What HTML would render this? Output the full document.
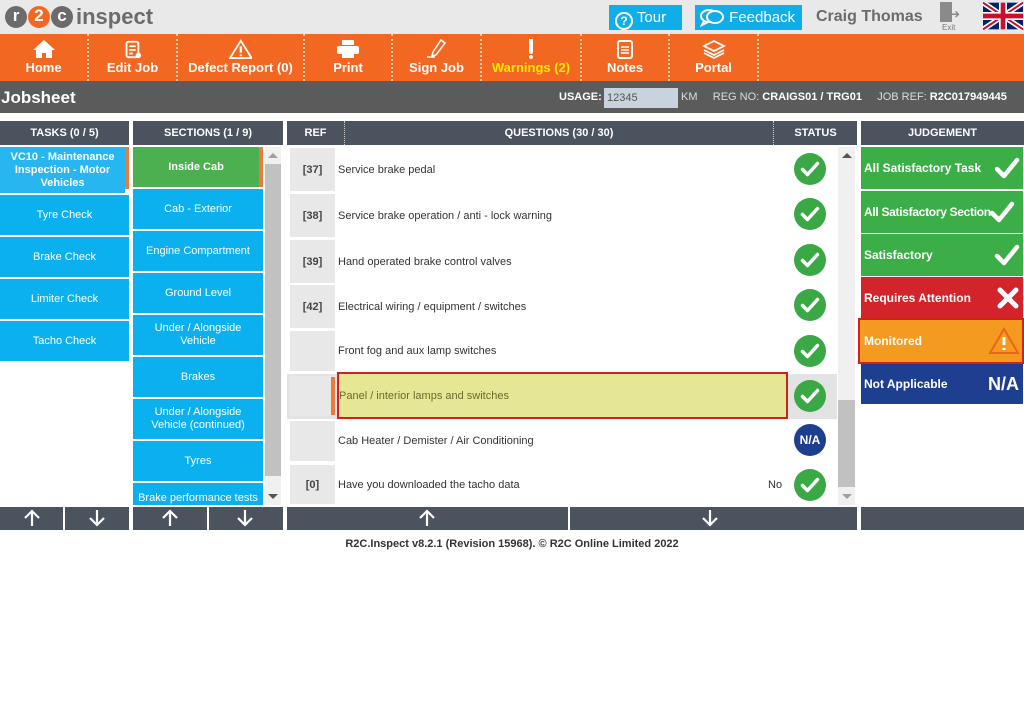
<!DOCTYPE html>
<html><head><meta charset="utf-8"><style>
*{box-sizing:border-box;margin:0;padding:0}
body{width:1024px;height:709px;background:#fff;font-family:"Liberation Sans",Arial,sans-serif;position:relative;overflow:hidden}
.a{position:absolute}
.top{left:0;top:0;width:1024px;height:34px;background:#e9e9e9}
.nav{left:0;top:34px;width:1024px;height:47px;background:#f26722}
.ni{position:absolute;top:0;height:47px;color:#fff;font-weight:bold;font-size:13px;text-align:center;border-right:2px dotted #f5c9a8}
.ni svg{display:block;margin:5px auto 0;height:20px}
.ni span{display:block;margin-top:1px}
.gb{left:0;top:81px;width:1024px;height:32px;background:#5b5b5b;color:#fff}
.hd{top:121px;height:24px;background:#4b535f;color:#fff;font-weight:bold;font-size:11px;text-align:center;line-height:24px}
.bl{background:#0bb0ee;color:#fff;font-size:11px;text-align:center;display:flex;align-items:center;justify-content:center;line-height:13px}
.ref{left:290px;width:45px;background:#e8e8e8;color:#444;font-size:11px;font-weight:bold;display:flex;align-items:center;justify-content:center}
.q{left:338px;color:#333;font-size:11px;display:flex;align-items:center}
.jb{left:861px;width:162px;color:#fff;font-weight:bold;font-size:12px;display:flex;align-items:center;padding-left:3px;white-space:nowrap;overflow:hidden}
.jb svg{margin-left:auto;margin-right:3px;flex-shrink:0}
.bn{top:507px;height:23px;background:#4b535f}
</style></head><body>
<div class="a top"></div>
<div class="a" style="left:5px;top:4px;display:flex;align-items:center">
<div style="width:22px;height:22px;border-radius:50%;background:#6b6b6b;color:#fff;font-weight:bold;font-size:17px;text-align:center;line-height:20px">r</div>
<div style="width:22px;height:22px;border-radius:50%;background:#f26722;color:#fff;font-weight:bold;font-size:17px;text-align:center;line-height:20px;margin-left:1px">2</div>
<div style="width:22px;height:22px;border-radius:50%;background:#6b6b6b;color:#fff;font-weight:bold;font-size:17px;text-align:center;line-height:20px;margin-left:1px">c</div>
<span style="font-size:22px;color:#6b6b6b;margin-left:3px;font-weight:bold">inspect</span></div>
<div class="a" style="left:609px;top:5px;width:73px;height:25px;background:#0faee8;color:#fff;font-size:15px;line-height:25px;padding-left:6px">
<span style="display:inline-block;width:18px;height:18px;border:2px solid #fff;border-radius:50%;font-size:12px;text-align:center;line-height:14px;font-weight:bold;vertical-align:-3px">?</span> Tour</div>
<div class="a" style="left:695px;top:5px;width:107px;height:25px;background:#0faee8;color:#fff;font-size:15px;line-height:25px;padding-left:4px">
<svg width="26" height="20" style="vertical-align:-5px" viewBox="0 0 26 20"><ellipse cx="10" cy="9" rx="8" ry="6" fill="none" stroke="#fff" stroke-width="2"/><ellipse cx="16" cy="10" rx="8" ry="6" fill="#0faee8" stroke="#fff" stroke-width="2"/><path d="M5 14 L3 18 L9 15" fill="none" stroke="#fff" stroke-width="2"/></svg> Feedback</div>
<div class="a" style="left:816px;top:8px;font-size:16px;font-weight:bold;color:#6b6b6b">Craig Thomas</div>
<div class="a" style="left:940px;top:2px;width:20px;height:20px;background:#8a8a8a;clip-path:polygon(0 0,60% 0,60% 100%,0 100%)"></div>
<div class="a" style="left:950px;top:7px;color:#8a8a8a;font-size:12px">➜</div>
<div class="a" style="left:942px;top:23px;font-size:8px;color:#777">Exit</div>
<svg class="a" style="left:983px;top:2px" width="40" height="28" viewBox="0 0 60 40"><rect width="60" height="40" fill="#012169"/><path d="M0 0L60 40M60 0L0 40" stroke="#fff" stroke-width="8"/><path d="M0 0L60 40M60 0L0 40" stroke="#c8102e" stroke-width="3"/><path d="M30 0V40M0 20H60" stroke="#fff" stroke-width="12"/><path d="M30 0V40M0 20H60" stroke="#c8102e" stroke-width="7"/></svg>

<div class="a nav">
<div class="ni" style="left:0;width:89px"><svg viewBox="0 0 24 20"><path d="M12 1L1 11h3v8h6v-5h4v5h6v-8h3z" fill="#fff"/></svg><span>Home</span></div>
<div class="ni" style="left:89px;width:89px"><svg viewBox="0 0 24 22"><rect x="5" y="3" width="13" height="17" rx="2" fill="none" stroke="#fff" stroke-width="2"/><path d="M8 8h7M8 12h7M8 16h4" stroke="#fff" stroke-width="2"/><circle cx="18" cy="18" r="3" fill="#fff"/></svg><span>Edit Job</span></div>
<div class="ni" style="left:178px;width:127px"><svg viewBox="0 0 26 22"><path d="M13 2L1 21h24z" fill="none" stroke="#fff" stroke-width="2"/><path d="M13 8v7M13 17v2" stroke="#fff" stroke-width="2.5"/></svg><span>Defect Report (0)</span></div>
<div class="ni" style="left:305px;width:88px"><svg viewBox="0 0 24 20"><rect x="6" y="1" width="12" height="5" fill="#fff"/><rect x="1" y="7" width="22" height="8" rx="2" fill="#fff"/><rect x="6" y="14" width="12" height="5" fill="#fff"/></svg><span>Print</span></div>
<div class="ni" style="left:393px;width:89px"><svg viewBox="0 0 24 20"><path d="M16 1l4 3-9 12-4 1 1-4z" fill="none" stroke="#fff" stroke-width="1.5"/><path d="M2 18h8" stroke="#fff" stroke-width="1.5"/></svg><span>Sign Job</span></div>
<div class="ni" style="left:482px;width:100px;color:#ffea00"><svg viewBox="0 0 24 20"><path d="M12 1v12" stroke="#fff" stroke-width="4" stroke-linecap="round"/><circle cx="12" cy="18" r="2" fill="#fff"/></svg><span>Warnings (2)</span></div>
<div class="ni" style="left:582px;width:88px"><svg viewBox="0 0 24 20"><rect x="5" y="2" width="14" height="17" rx="2" fill="none" stroke="#fff" stroke-width="2"/><path d="M8 8h8M8 11h8M8 14h8" stroke="#fff" stroke-width="1.5"/></svg><span>Notes</span></div>
<div class="ni" style="left:670px;width:89px"><svg viewBox="0 0 24 20"><path d="M12 2L2 7l10 5 10-5z M2 11l10 5 10-5 M2 14l10 5 10-5" fill="none" stroke="#fff" stroke-width="1.8"/></svg><span>Portal</span></div>
</div>

<div class="a gb"><div class="a" style="left:1px;top:7px;font-size:17px;font-weight:bold">Jobsheet</div>
<div class="a" style="left:559px;top:10px;font-size:11px;font-weight:bold">USAGE:</div>
<div class="a" style="left:604px;top:7px;width:74px;height:20px;background:#c9d3de;color:#555;font-size:11px;line-height:20px;padding-left:3px">12345</div>
<div class="a" style="left:681px;top:10px;font-size:11px;color:#ddd">KM &nbsp; &nbsp; REG NO: <b style="color:#fff">CRAIGS01 / TRG01</b> &nbsp; &nbsp; JOB REF: <b style="color:#fff">R2C017949445</b></div></div>

<div class="a hd" style="left:0;width:129px">TASKS (0 / 5)</div>
<div class="a hd" style="left:133px;width:150px">SECTIONS (1 / 9)</div>
<div class="a hd" style="left:287px;width:58px;border-right:1px dotted #ccc">REF</div>
<div class="a hd" style="left:345px;width:429px;border-right:1px dotted #ccc">QUESTIONS (30 / 30)</div>
<div class="a hd" style="left:774px;width:83px">STATUS</div>
<div class="a hd" style="left:861px;width:163px">JUDGEMENT</div>

<div class="a bl" style="left:0;top:147px;width:125px;height:46px;background:#27b6f0;font-weight:bold">VC10 - Maintenance<br>Inspection - Motor<br>Vehicles</div>
<div class="a" style="left:125px;top:147px;width:4px;height:42px;background:#e87b3f"></div>
<div class="a bl" style="left:0;top:195px;width:129px;height:40px">Tyre Check</div>
<div class="a bl" style="left:0;top:237px;width:129px;height:40px">Brake Check</div>
<div class="a bl" style="left:0;top:279px;width:129px;height:40px">Limiter Check</div>
<div class="a bl" style="left:0;top:321px;width:129px;height:40px">Tacho Check</div>

<div class="a bl" style="left:133px;top:147px;width:126px;height:40px;background:#4cb050;font-weight:bold">Inside Cab</div>
<div class="a" style="left:259px;top:147px;width:4px;height:40px;background:#e87b3f"></div>
<div class="a bl" style="left:133px;top:189px;width:130px;height:40px">Cab - Exterior</div>
<div class="a bl" style="left:133px;top:231px;width:130px;height:40px">Engine Compartment</div>
<div class="a bl" style="left:133px;top:273px;width:130px;height:40px">Ground Level</div>
<div class="a bl" style="left:133px;top:315px;width:130px;height:40px">Under / Alongside<br>Vehicle</div>
<div class="a bl" style="left:133px;top:357px;width:130px;height:40px">Brakes</div>
<div class="a bl" style="left:133px;top:399px;width:130px;height:40px">Under / Alongside<br>Vehicle (continued)</div>
<div class="a bl" style="left:133px;top:441px;width:130px;height:40px">Tyres</div>
<div class="a bl" style="left:133px;top:483px;width:130px;height:22px;align-items:flex-end">Brake performance tests</div>
<div class="a" style="left:265px;top:147px;width:16px;height:358px;background:#f0f0f0"></div>
<div class="a" style="left:265px;top:164px;width:16px;height:312px;background:#c1c1c1"></div>
<div class="a" style="left:268px;top:153px;border:5px solid transparent;border-bottom-color:#a0a0a0;border-top:0"></div>
<div class="a" style="left:268px;top:494px;border:5px solid transparent;border-top-color:#555;border-bottom:0"></div>

<div class="a" style="left:287px;top:374px;width:550px;height:45px;background:#e3e3e3"></div>
<div class="a ref" style="top:148px;height:43px">[37]</div><div class="a q" style="top:148px;height:43px">Service brake pedal</div>
<div class="a ref" style="top:194px;height:43px">[38]</div><div class="a q" style="top:194px;height:43px">Service brake operation / anti - lock warning</div>
<div class="a ref" style="top:240px;height:43px">[39]</div><div class="a q" style="top:240px;height:43px">Hand operated brake control valves</div>
<div class="a ref" style="top:285px;height:43px">[42]</div><div class="a q" style="top:285px;height:43px">Electrical wiring / equipment / switches</div>
<div class="a ref" style="top:331px;height:40px"></div><div class="a q" style="top:331px;height:40px">Front fog and aux lamp switches</div>
<div class="a ref" style="top:376px;height:40px"></div>
<div class="a" style="left:331px;top:377px;width:4px;height:38px;background:#e87b3f"></div>
<div class="a q" style="left:337px;top:372px;width:451px;height:47px;background:#e5e795;border:2px solid #d02020;color:#6b6b2b">Panel / interior lamps and switches</div>
<div class="a ref" style="top:421px;height:40px"></div><div class="a q" style="top:421px;height:40px">Cab Heater / Demister / Air Conditioning</div>
<div class="a ref" style="top:465px;height:39px">[0]</div><div class="a q" style="top:465px;height:39px">Have you downloaded the tacho data</div>
<div class="a" style="left:768px;top:479px;font-size:11px;color:#333">No</div>
<svg width="0" height="0"><defs><symbol id="ck" viewBox="0 0 32 32"><circle cx="16" cy="16" r="16" fill="#3aa845"/><path d="M8.5 16.5l5 5 10-11" fill="none" stroke="#fff" stroke-width="3.5" stroke-linecap="round" stroke-linejoin="round"/></symbol></defs></svg>
<svg class="a" style="left:794px;top:153px" width="32" height="32"><use href="#ck"/></svg>
<svg class="a" style="left:794px;top:198px" width="32" height="32"><use href="#ck"/></svg>
<svg class="a" style="left:794px;top:244px" width="32" height="32"><use href="#ck"/></svg>
<svg class="a" style="left:794px;top:289px" width="32" height="32"><use href="#ck"/></svg>
<svg class="a" style="left:794px;top:335px" width="32" height="32"><use href="#ck"/></svg>
<svg class="a" style="left:794px;top:380px" width="32" height="32"><use href="#ck"/></svg>
<div class="a" style="left:794px;top:424px;width:32px;height:32px;border-radius:50%;background:#1e3f8f;color:#fff;font-weight:bold;font-size:12px;text-align:center;line-height:32px">N/A</div>
<svg class="a" style="left:794px;top:469px" width="32" height="32"><use href="#ck"/></svg>
<div class="a" style="left:838px;top:147px;width:17px;height:358px;background:#f0f0f0"></div>
<div class="a" style="left:838px;top:400px;width:17px;height:87px;background:#c1c1c1"></div>
<div class="a" style="left:842px;top:153px;border:5px solid transparent;border-bottom-color:#555;border-top:0"></div>
<div class="a" style="left:842px;top:494px;border:5px solid transparent;border-top-color:#a0a0a0;border-bottom:0"></div>

<svg width="0" height="0"><defs><symbol id="wc" viewBox="0 0 26 24"><path d="M3 13l7 7L23 4" fill="none" stroke="#fff" stroke-width="4.5" stroke-linecap="round" stroke-linejoin="round"/></symbol></defs></svg>
<div class="a jb" style="top:147px;height:42px;background:#3cae47">All Satisfactory Task<svg width="26" height="24"><use href="#wc"/></svg></div>
<div class="a jb" style="top:191px;height:42px;background:#3cae47;letter-spacing:-0.3px">All Satisfactory Section<svg width="26" height="24" style="margin-left:-2px;margin-right:1px"><use href="#wc"/></svg></div>
<div class="a jb" style="top:234px;height:42px;background:#3cae47">Satisfactory<svg width="26" height="24"><use href="#wc"/></svg></div>
<div class="a jb" style="top:277px;height:41px;background:#d3242b">Requires Attention<svg width="24" height="24" viewBox="0 0 24 24"><path d="M4 4l16 16M20 4L4 20" stroke="#fff" stroke-width="5" stroke-linecap="round"/></svg></div>
<div class="a jb" style="left:858px;width:166px;top:318px;height:46px;background:#f49b1f;border:2px solid #d41f1f;padding-left:4px">Monitored
<svg style="margin-left:auto;margin-right:2px" width="32" height="28" viewBox="0 0 32 28"><path d="M16 2L2 26h28z" fill="none" stroke="#e8661c" stroke-width="2"/><path d="M16 10v8M16 21v2" stroke="#fff" stroke-width="3"/></svg></div>
<div class="a jb" style="top:364px;height:40px;background:#1e3f8f">Not Applicable<span style="margin-left:auto;margin-right:4px;font-size:18px">N/A</span></div>

<div class="a bn" style="left:0;width:63px"></div><div class="a bn" style="left:65px;width:64px"></div>
<div class="a bn" style="left:133px;width:74px"></div><div class="a bn" style="left:209px;width:74px"></div>
<div class="a bn" style="left:287px;width:281px"></div><div class="a bn" style="left:570px;width:287px"></div>
<div class="a bn" style="left:861px;width:163px"></div>
<svg width="0" height="0"><defs><symbol id="up" viewBox="0 0 20 20"><path d="M10 18V3M3 10l7-7 7 7" fill="none" stroke="#fff" stroke-width="2.2"/></symbol><symbol id="dn" viewBox="0 0 20 20"><path d="M10 2v15M3 10l7 7 7-7" fill="none" stroke="#fff" stroke-width="2.2"/></symbol></defs></svg>
<svg class="a" style="left:22px;top:508px" width="20" height="20"><use href="#up"/></svg>
<svg class="a" style="left:87px;top:508px" width="20" height="20"><use href="#dn"/></svg>
<svg class="a" style="left:160px;top:508px" width="20" height="20"><use href="#up"/></svg>
<svg class="a" style="left:235px;top:508px" width="20" height="20"><use href="#dn"/></svg>
<svg class="a" style="left:417px;top:508px" width="20" height="20"><use href="#up"/></svg>
<svg class="a" style="left:700px;top:508px" width="20" height="20"><use href="#dn"/></svg>

<div class="a" style="left:0;top:538px;width:1024px;text-align:center;font-size:11px;font-weight:bold;color:#333">R2C.Inspect v8.2.1 (Revision 15968). © R2C Online Limited 2022</div>
</body></html>
